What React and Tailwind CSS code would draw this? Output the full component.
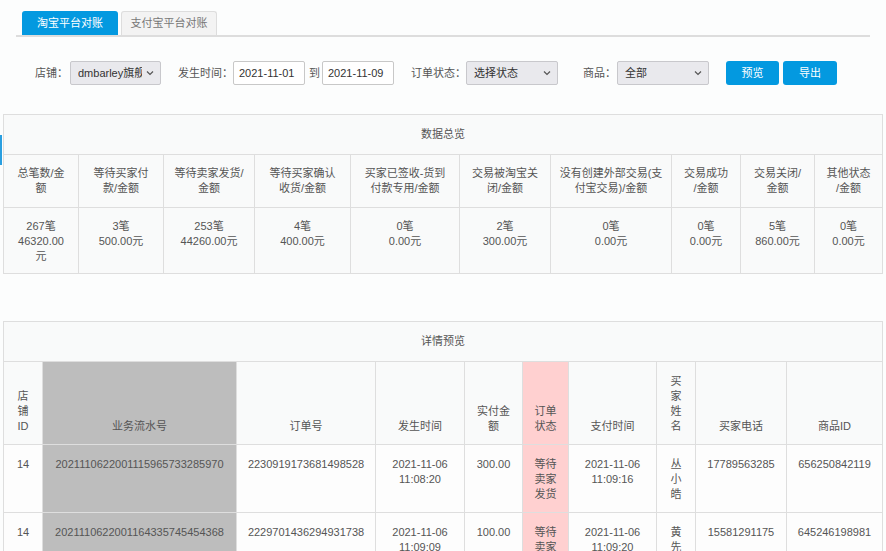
import React from "react";

const font = { fontFamily: '"Liberation Sans", "Noto Sans CJK SC", sans-serif' };

const overview = [
  { head: ["总笔数/金", "额"], val: ["267笔", "46320.00", "元"] },
  { head: ["等待买家付", "款/金额"], val: ["3笔", "500.00元"] },
  { head: ["等待卖家发货/", "金额"], val: ["253笔", "44260.00元"] },
  { head: ["等待买家确认", "收货/金额"], val: ["4笔", "400.00元"] },
  { head: ["买家已签收-货到", "付款专用/金额"], val: ["0笔", "0.00元"] },
  { head: ["交易被淘宝关", "闭/金额"], val: ["2笔", "300.00元"] },
  { head: ["没有创建外部交易(支", "付宝交易)/金额"], val: ["0笔", "0.00元"] },
  { head: ["交易成功", "/金额"], val: ["0笔", "0.00元"] },
  { head: ["交易关闭/", "金额"], val: ["5笔", "860.00元"] },
  { head: ["其他状态", "/金额"], val: ["0笔", "0.00元"] },
];
const overviewCols = [75, 85, 91, 96, 109, 91, 121, 69, 74, 68];

const detailCols = [
  { w: 39, head: ["店", "铺", "ID"] },
  { w: 194, head: ["业务流水号"], bg: "bg-[#bdbdbd]" },
  { w: 139, head: ["订单号"] },
  { w: 89, head: ["发生时间"] },
  { w: 58, head: ["实付金", "额"] },
  { w: 46, head: ["订单", "状态"], bg: "bg-[#ffd0d0]" },
  { w: 88, head: ["支付时间"] },
  { w: 39, head: ["买", "家", "姓", "名"] },
  { w: 91, head: ["买家电话"] },
  { w: 96, head: ["商品ID"] },
];

const rows = [
  [
    ["14"],
    ["2021110622001115965733285970"],
    ["2230919173681498528"],
    ["2021-11-06", "11:08:20"],
    ["300.00"],
    ["等待", "卖家", "发货"],
    ["2021-11-06", "11:09:16"],
    ["丛", "小", "皓"],
    ["17789563285"],
    ["656250842119"],
  ],
  [
    ["14"],
    ["2021110622001164335745454368"],
    ["2229701436294931738"],
    ["2021-11-06", "11:09:09"],
    ["100.00"],
    ["等待", "卖家", "发货"],
    ["2021-11-06", "11:09:20"],
    ["黄", "先", "生"],
    ["15581291175"],
    ["645246198981"],
  ],
];

function Lines({ lines }) {
  return lines.map((l, i) => (
    <React.Fragment key={i}>
      {i > 0 && <br />}
      {l}
    </React.Fragment>
  ));
}

function Chevron() {
  return (
    <svg width="8" height="6" viewBox="0 0 8 6" className="shrink-0">
      <polyline points="1,1.5 4,4.5 7,1.5" fill="none" stroke="#555" strokeWidth="1.2" />
    </svg>
  );
}

function Select({ w, text }) {
  return (
    <div
      className={`${w} h-[24px] flex items-center justify-between gap-1 pl-[7px] pr-[6px] bg-[#e9e9ed] border border-[#c8c8cc] rounded-[2px] text-[#333] overflow-hidden`}
    >
      <span className="whitespace-nowrap overflow-hidden">{text}</span>
      <Chevron />
    </div>
  );
}

function DateInput({ value }) {
  return (
    <div className="w-[72px] h-[24px] flex items-center pl-[5px] bg-white border border-[#c8c8c8] rounded-[2px] text-[#333]">
      {value}
    </div>
  );
}

export default function App() {
  return (
    <div className="flex min-h-screen bg-[#fcfdfd] text-[11px] leading-[15px] text-[#555]" style={font}>
      <div className="w-[3px] shrink-0">
        <div className="mt-[135px] h-[30px] w-[2px] bg-[#2a9fe0]" />
      </div>

      <div className="w-[879px] shrink-0 pb-10">
        {/* tabs */}
        <div className="ml-[13px] w-[854px] mt-[11px] flex items-end gap-[3px] pl-[6px] border-b-2 border-[#dddddd]">
          <div className="w-[96px] h-[24px] flex items-center justify-center rounded-t-[3px] bg-[#0399e0] text-white">
            淘宝平台对账
          </div>
          <div className="w-[96px] h-[24px] flex items-center justify-center rounded-t-[3px] bg-[#f3f3f3] border border-b-0 border-[#dddddd] text-[#777]">
            支付宝平台对账
          </div>
        </div>

        {/* filters */}
        <div className="mt-[24px] flex items-center pl-[32px]">
          <span className="mr-[2px]">店铺：</span>
          <Select w="w-[91px]" text="dmbarley旗舰店" />
          <span className="ml-[17px]">发生时间：</span>
          <DateInput value="2021-11-01" />
          <span className="ml-[4px] mr-[2px]">到</span>
          <DateInput value="2021-11-09" />
          <span className="ml-[17px]">订单状态：</span>
          <Select w="w-[92px]" text="选择状态" />
          <span className="ml-[25px] mr-[1px]">商品：</span>
          <Select w="w-[92px]" text="全部" />
          <button className="ml-[17px] w-[53px] h-[24px] rounded-[3px] bg-[#0399e0] text-white">预览</button>
          <button className="ml-[4px] w-[54px] h-[24px] rounded-[3px] bg-[#0399e0] text-white">导出</button>
        </div>

        {/* overview */}
        <table className="mt-[29px] w-[879px] table-fixed border-collapse bg-[#f9fafa]">
          <colgroup>
            {overviewCols.map((w, i) => (
              <col key={i} style={{ width: w }} />
            ))}
          </colgroup>
          <tbody>
            <tr className="h-[40px]">
              <td colSpan={10} className="border border-[#dedede] text-center align-middle">
                数据总览
              </td>
            </tr>
            <tr>
              {overview.map((c, i) => (
                <td key={i} className="border border-[#dedede] text-center align-top py-[11px] px-[4px] whitespace-nowrap">
                  <Lines lines={c.head} />
                </td>
              ))}
            </tr>
            <tr className="h-[66px]">
              {overview.map((c, i) => (
                <td key={i} className="border border-[#dedede] text-center align-top pt-[11px] px-[4px] whitespace-nowrap">
                  <Lines lines={c.val} />
                </td>
              ))}
            </tr>
          </tbody>
        </table>

        {/* details */}
        <table className="mt-[47px] w-[879px] table-fixed border-collapse bg-[#f9fafa]">
          <colgroup>
            {detailCols.map((c, i) => (
              <col key={i} style={{ width: c.w }} />
            ))}
          </colgroup>
          <tbody>
            <tr className="h-[40px]">
              <td colSpan={10} className="border border-[#dedede] text-center align-middle">
                详情预览
              </td>
            </tr>
            <tr className="h-[83px]">
              {detailCols.map((c, i) => (
                <td
                  key={i}
                  className={`border border-[#dedede] text-center align-bottom pb-[10px] px-[2px] whitespace-nowrap ${c.bg || ""}`}
                >
                  <Lines lines={c.head} />
                </td>
              ))}
            </tr>
            {rows.map((r, ri) => (
              <tr key={ri} className="h-[68px]">
                {r.map((cell, ci) => (
                  <td
                    key={ci}
                    className={`border border-[#dedede] text-center align-top pt-[12px] px-[2px] whitespace-nowrap ${
                      detailCols[ci].bg || "bg-[#fdfdfd]"
                    }`}
                  >
                    <Lines lines={cell} />
                  </td>
                ))}
              </tr>
            ))}
          </tbody>
        </table>
      </div>
    </div>
  );
}
